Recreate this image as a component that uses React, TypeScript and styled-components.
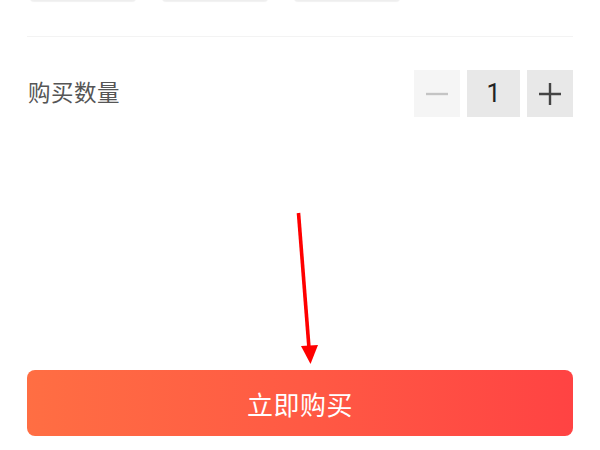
import React from "react";
import styled, { createGlobalStyle } from "styled-components";

const GlobalStyle = createGlobalStyle`
  html, body {
    margin: 0;
    padding: 0;
    background: #ffffff;
  }
  body {
    font-family: "Noto Sans CJK SC", "Noto Sans", sans-serif;
  }
`;

const Page = styled.div`
  position: relative;
  width: 600px;
  height: 450px;
  overflow: hidden;
  display: flex;
  flex-direction: column;
  padding: 0 27px;
  box-sizing: border-box;
`;

const ChipRow = styled.div`
  display: flex;
  gap: 26px;
  margin-top: -36px;
  padding-left: 3px;
`;

const Chip = styled.div<{ $w: number }>`
  width: ${({ $w }) => $w}px;
  height: 37px;
  background: #eeeeee;
  border-radius: 4px;
  box-shadow: 0 0.5px 1px rgba(0, 0, 0, 0.06);
`;

const Divider = styled.div`
  height: 1px;
  background: #f3f3f3;
  margin-top: 35px;
`;

const QtyRow = styled.div`
  display: flex;
  align-items: center;
  justify-content: space-between;
  padding-top: 33px;
`;

const Label = styled.span`
  font-size: 22.5px;
  line-height: 1;
  color: #555555;
  letter-spacing: 0.5px;
  padding-left: 1px;
  margin-top: -4px;
`;

const Stepper = styled.div`
  display: flex;
  gap: 7px;
`;

const StepBtn = styled.div<{ $disabled?: boolean }>`
  width: 46px;
  height: 47px;
  display: flex;
  align-items: center;
  justify-content: center;
  background: ${({ $disabled }) => ($disabled ? "#f5f5f5" : "#e8e8e8")};
`;

const Count = styled(StepBtn)`
  width: 53px;
  font-family: "Roboto", "Noto Sans", sans-serif;
  font-size: 25px;
  color: #222222;
`;

const Spacer = styled.div`
  flex: 1;
`;

const BuyButton = styled.button`
  height: 66px;
  margin-bottom: 14px;
  border: none;
  border-radius: 8px;
  background: linear-gradient(90deg, #ff6e43 0%, #ff5a44 50%, #ff4343 100%);
  color: #ffffff;
  font-family: "Noto Sans CJK SC", sans-serif;
  font-size: 26px;
  letter-spacing: 0.5px;
  padding: 0;
`;

const ArrowLayer = styled.svg`
  position: absolute;
  left: 0;
  top: 0;
  pointer-events: none;
`;

export default function App() {
  return (
    <>
      <GlobalStyle />
      <Page>
        <ChipRow>
          <Chip $w={106} />
          <Chip $w={106} />
          <Chip $w={106} />
        </ChipRow>
        <Divider />
        <QtyRow>
          <Label>购买数量</Label>
          <Stepper>
            <StepBtn $disabled>
              <svg width="22" height="22" viewBox="0 0 22 22">
                <path d="M0 11h22" stroke="#c4c4c4" strokeWidth="2.4" />
              </svg>
            </StepBtn>
            <Count>1</Count>
            <StepBtn>
              <svg width="22" height="22" viewBox="0 0 22 22">
                <path d="M0 11h22M11 0v22" stroke="#444444" strokeWidth="2.4" />
              </svg>
            </StepBtn>
          </Stepper>
        </QtyRow>
        <Spacer />
        <BuyButton>立即购买</BuyButton>
        <ArrowLayer width="600" height="450" viewBox="0 0 600 450">
          <path d="M298.5 213 L309 348" stroke="#ff0000" strokeWidth="3.6" strokeLinecap="butt" />
          <path d="M301 346 L318 345 L310.5 364 Z" fill="#ff0000" />
        </ArrowLayer>
      </Page>
    </>
  );
}
